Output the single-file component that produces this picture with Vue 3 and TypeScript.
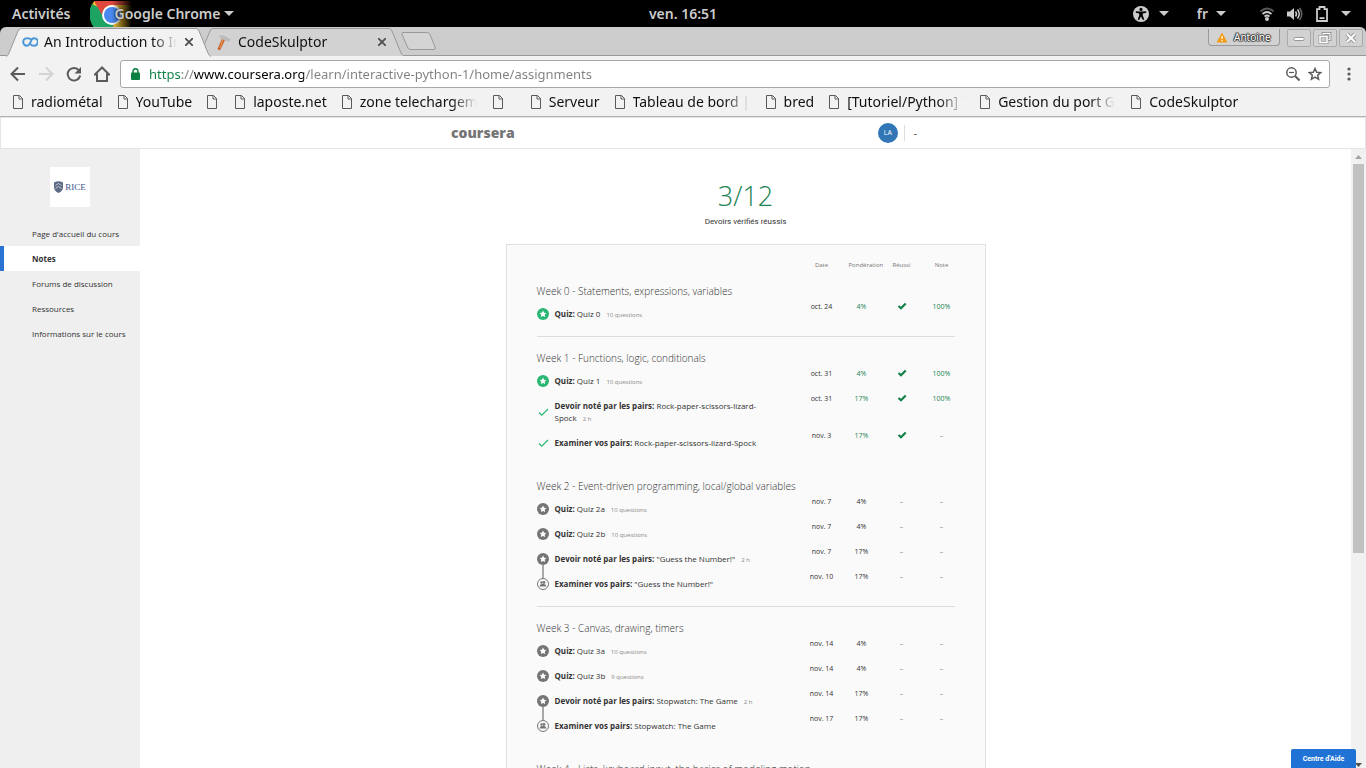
<script setup lang="ts">
import { ref } from 'vue'

interface Item {
  kind: string
  title: string
  meta?: string
  icon: 'star-done' | 'check' | 'star' | 'peers'
  date: string
  weight: string
  passed: boolean
  grade: string
}
interface Week {
  title: string
  divider: boolean
  items: Item[]
}

const url = ref('https://www.coursera.org/learn/interactive-python-1/home/assignments')

const bookmarks: string[] = [
  'radiométal', 'YouTube', '', 'laposte.net', 'zone telechargement', ' ', 'Serveur',
  'Tableau de bord | OpenClassrooms', 'bred', '[Tutoriel/Python] Tkinter', 'Gestion du port GPIO', 'CodeSkulptor',
]

const nav = ["Page d'accueil du cours", 'Notes', 'Forums de discussion', 'Ressources', 'Informations sur le cours']
const active = 'Notes'

const quiz = (title: string, meta: string, date: string, done = false): Item => ({
  kind: 'Quiz:', title, meta, date, icon: done ? 'star-done' : 'star',
  weight: '4%', passed: done, grade: done ? '100%' : '–',
})
const peer = (title: string, date: string, done = false): Item => ({
  kind: 'Devoir noté par les pairs:', title, meta: '2 h', date, icon: done ? 'check' : 'star',
  weight: '17%', passed: done, grade: done ? '100%' : '–',
})
const review = (title: string, date: string, done = false): Item => ({
  kind: 'Examiner vos pairs:', title, date, icon: done ? 'check' : 'peers',
  weight: '17%', passed: done, grade: '–',
})

const weeks: Week[] = [
  { title: 'Week 0 - Statements, expressions, variables', divider: true, items: [quiz('Quiz 0', '10 questions', 'oct. 24', true)] },
  {
    title: 'Week 1 - Functions, logic, conditionals', divider: false,
    items: [
      quiz('Quiz 1', '10 questions', 'oct. 31', true),
      peer('Rock-paper-scissors-lizard-Spock', 'oct. 31', true),
      review('Rock-paper-scissors-lizard-Spock', 'nov. 3', true),
    ],
  },
  {
    title: 'Week 2 - Event-driven programming, local/global variables', divider: true,
    items: [
      quiz('Quiz 2a', '10 questions', 'nov. 7'),
      quiz('Quiz 2b', '10 questions', 'nov. 7'),
      peer('"Guess the Number!"', 'nov. 7'),
      review('"Guess the Number!"', 'nov. 10'),
    ],
  },
  {
    title: 'Week 3 - Canvas, drawing, timers', divider: false,
    items: [
      quiz('Quiz 3a', '10 questions', 'nov. 14'),
      quiz('Quiz 3b', '9 questions', 'nov. 14'),
      peer('Stopwatch: The Game', 'nov. 14'),
      review('Stopwatch: The Game', 'nov. 17'),
    ],
  },
  { title: 'Week 4 - Lists, keyboard input, the basics of modeling motion', divider: false, items: [] },
]
</script>

<template>
  <div class="screen">
    <header class="shell">
      <div class="shell-left">
        <button class="shell-btn">Activités</button>
        <button class="shell-btn app-menu">
          <svg class="app-logo" width="44" height="26" viewBox="0 0 44 26" aria-hidden="true">
            <defs>
              <linearGradient id="fade" x1="0" x2="1"><stop offset=".5" stop-color="#fff" /><stop offset=".95" stop-color="#000" /></linearGradient>
              <mask id="fadeMask"><rect width="44" height="26" fill="url(#fade)" /></mask>
            </defs>
            <g mask="url(#fadeMask)">
              <circle cx="22" cy="13" r="22" fill="#f2c12e" />
              <path d="M22 13 L2 3 A22 22 0 0 0 10 32 L24 32 Z" fill="#1da362" />
              <path d="M4 0 Q22 -16 44 4 L22 4 A10 10 0 0 0 12 14 Z" fill="#e0483e" />
              <circle cx="22" cy="14" r="10" fill="#fff" />
              <circle cx="22" cy="14" r="8" fill="#4a87ee" />
            </g>
          </svg>
          <span class="app-name">Google Chrome</span>
          <svg width="10" height="6" viewBox="0 0 10 6"><path d="M0 0h10L5 5z" fill="#ccc" /></svg>
        </button>
      </div>
      <button class="shell-btn">ven. 16:51</button>
      <div class="shell-right">
        <button class="shell-btn tray" aria-label="Accessibilité">
          <svg width="16" height="16" viewBox="0 0 16 16">
            <circle cx="8" cy="8" r="8" fill="#ccc" />
            <circle cx="8" cy="3.4" r="1.6" fill="#000" />
            <path d="M2.8 5.2 L6.5 5.6h3L13.2 5.2v1.5L9.8 7.4v2l1.5 4.2-1.4.5L8 10.4 6.1 14.1l-1.4-.5 1.5-4.2v-2L2.8 6.7z" fill="#000" />
          </svg>
          <svg width="10" height="6" viewBox="0 0 10 6"><path d="M0 0h10L5 5z" fill="#ccc" /></svg>
        </button>
        <button class="shell-btn tray lang">fr<svg width="10" height="6" viewBox="0 0 10 6"><path d="M0 0h10L5 5z" fill="#ccc" /></svg></button>
        <button class="shell-btn tray status" aria-label="Système">
          <svg width="14" height="14" viewBox="0 0 14 14" fill="none">
            <path d="M.5 4.5Q7-1.500 13.500 4.500" stroke="#555" stroke-width="2" />
            <path d="M2.500 7Q7 3 11.500 7" stroke="#ccc" stroke-width="1.700" />
            <path d="M4.500 9.500Q7 7.500 9.500 9.500" stroke="#ccc" stroke-width="1.700" />
            <circle cx="7" cy="12" r="2" fill="#ccc" />
          </svg>
          <svg width="16" height="14" viewBox="0 0 16 14" fill="none">
            <path d="M0 4.500h3L7 1v12L3 9.500H0z" fill="#ccc" />
            <path d="M8.500 4.500q2 2.500 0 5M10.500 2.500q3.500 4.500 0 9" stroke="#ccc" stroke-width="1.500" />
            <path d="M12.500 1q4.500 6 0 12" stroke="#666" stroke-width="1.500" />
          </svg>
          <svg width="12" height="16" viewBox="0 0 12 16">
            <path d="M3.500 1h5v2.200H11V15H1V3.200h2.500z" fill="none" stroke="#ccc" stroke-width="1.800" />
            <path d="M3.500 11.200h5v1.800h-5z" fill="#ccc" />
          </svg>
          <svg width="10" height="6" viewBox="0 0 10 6"><path d="M0 0h10L5 5z" fill="#ccc" /></svg>
        </button>
      </div>
    </header>

    <div class="strip-back">
      <div class="strip">
        <div class="tabs" role="tablist">
          <div class="tab current">
            <svg class="tab-shape" width="205" height="29" viewBox="0 0 205 29" aria-hidden="true">
              <path d="M0 28.500Q2 28 3 25L12 3Q13 .500 15 .500H190Q192 .500 193 3L202 25Q203 28 205 28.500" fill="#f2f2f2" stroke="#999" />
              <path d="M1 28.500H204" stroke="#f2f2f2" stroke-width="1.500" />
            </svg>
            <svg class="favicon" width="16" height="10" viewBox="0 0 16 10" fill="none">
              <path d="M9.500 2.500Q7.500 1 5 1.200A3.800 3.800 0 0 0 5 8.800Q7 8.800 8.500 5T12 1.200A3.800 3.800 0 0 1 12 8.800Q9.500 8.800 8.500 7" stroke="#4b97d8" stroke-width="2" />
            </svg>
            <span class="tab-title">An Introduction to Interactive</span>
            <button class="tab-close" aria-label="Fermer l'onglet"><svg width="8" height="8" viewBox="0 0 8 8"><path d="M0 0L8 8M8 0L0 8" stroke="#4f4f4f" stroke-width="1.800" /></svg></button>
          </div>
          <div class="tab">
            <svg class="tab-shape" width="205" height="28" viewBox="0 0 205 28" aria-hidden="true">
              <path d="M8 10L11 3Q12 .500 14 .500H190Q192 .500 193 3L202 25Q203 27 205 28H12Q9 27 8 24L5 16z" fill="#d2d2d2" />
              <path d="M5.500 16L11 3Q12 .500 14 .500H190Q192 .500 193 3L202 25Q203 27 205 28" fill="none" stroke="#999" />
            </svg>
            <svg class="favicon" width="16" height="16" viewBox="0 0 16 16">
              <path d="M6 4.500L9 6 4.500 15.500Q3 16.500 1.500 15z" fill="#c9652b" />
              <path d="M7 5L4 14" stroke="#e79a5c" />
              <path d="M2 1Q6-.500 10 1.500L15 5 13 8 9 6.500 5 4.500Q4 2.500 2 1z" fill="#bcbcbc" />
              <path d="M2 1Q6-.500 10 1.500L14 4.500" fill="none" stroke="#ddd" />
            </svg>
            <span class="tab-title">CodeSkulptor</span>
            <button class="tab-close" aria-label="Fermer l'onglet"><svg width="8" height="8" viewBox="0 0 8 8"><path d="M0 0L8 8M8 0L0 8" stroke="#4f4f4f" stroke-width="1.800" /></svg></button>
          </div>
          <button class="new-tab" aria-label="Nouvel onglet">
            <svg width="36" height="19" viewBox="0 0 36 19"><path d="M2 .500H26Q28 .500 29 2.500L34 15Q35 17.500 33 17.500H9Q7.500 17.500 6.500 15L1 2.500Q.500 .500 2 .500z" fill="#d4d4d4" stroke="#999" /></svg>
          </button>
        </div>
        <div class="window-tools">
          <button class="profile">
            <svg width="12" height="11" viewBox="0 0 12 11"><path d="M6 .500L11.500 10.500H.500z" fill="#f29c11" /><path d="M6 4v3M6 8v1.200" stroke="#fff" stroke-width="1.200" /></svg>
            <span>Antoine</span>
          </button>
          <button class="win" aria-label="Réduire"><svg width="14" height="12" viewBox="0 0 14 12"><rect x="2" y="5.500" width="10" height="3" rx="1" fill="#fff" stroke="#999" /></svg></button>
          <button class="win" aria-label="Restaurer"><svg width="14" height="12" viewBox="0 0 14 12" fill="none"><path d="M5 1.500h7v6H5z" stroke="#999" stroke-width="3" /><path d="M5 1.500h7v6H5z" stroke="#fff" /><path d="M2 4.500h7v6H2z" fill="#ccc" stroke="#999" stroke-width="3" /><path d="M2 4.500h7v6H2z" stroke="#fff" stroke-width="1.500" /></svg></button>
          <button class="win" aria-label="Fermer"><svg width="14" height="12" viewBox="0 0 14 12"><path d="M3 2l8 8M11 2l-8 8" stroke="#999" stroke-width="4" /><path d="M3 2l8 8M11 2l-8 8" stroke="#fff" stroke-width="2" /></svg></button>
        </div>
      </div>
    </div>

    <div class="toolbar">
      <button class="tool" aria-label="Précédent"><svg width="16" height="16" viewBox="0 0 16 16" fill="none" stroke="#5a5a5a" stroke-width="2"><path d="M15 8H2M8 1.500L1.500 8 8 14.500" /></svg></button>
      <button class="tool" aria-label="Suivant"><svg width="16" height="16" viewBox="0 0 16 16" fill="none" stroke="#d3d3d3" stroke-width="2"><path d="M1 8h13M8 1.500L14.500 8 8 14.500" /></svg></button>
      <button class="tool" aria-label="Actualiser"><svg width="16" height="16" viewBox="0 0 16 16"><path d="M13 4.300A6.300 6.300 0 1 0 14.200 9.500" fill="none" stroke="#5a5a5a" stroke-width="2" /><path d="M15 1v6.500H8.500z" fill="#5a5a5a" /></svg></button>
      <button class="tool" aria-label="Accueil"><svg width="16" height="16" viewBox="1 0 16 16"><path d="M9 1.500L1.800 8.500H4V15h10V8.500h2.200z" fill="none" stroke="#5a5a5a" stroke-width="2" /></svg></button>
      <div class="omnibox">
        <svg width="9" height="12" viewBox="0 0 9 12"><rect y="4.500" width="9" height="7.500" rx="1" fill="#0b8043" /><path d="M2 5V3.200a2.500 2.500 0 0 1 5 0V5" fill="none" stroke="#0b8043" stroke-width="1.500" /></svg>
        <input v-model="url" class="url" type="text" aria-label="Adresse" spellcheck="false" />
        <button class="tool" aria-label="Zoom"><svg width="14" height="14" viewBox="0 0 14 14" fill="none" stroke="#5a5a5a"><circle cx="5.500" cy="5.500" r="4.700" stroke-width="1.500" /><path d="M3 5.500h5" stroke-width="1.200" /><path d="M9 9l4.500 4.500" stroke-width="2" /></svg></button>
        <button class="tool" aria-label="Favori"><svg width="14" height="14" viewBox="0 0 14 14"><path d="M7 1.500l1.700 3.700 4 .4-3 2.700.9 4L7 10.200l-3.600 2.100.9-4-3-2.700 4-.4z" fill="none" stroke="#5a5a5a" stroke-width="1.500" /></svg></button>
      </div>
      <button class="tool more" aria-label="Menu"><svg width="4" height="14" viewBox="0 0 4 14" fill="#5a5a5a"><circle cx="2" cy="2" r="1.600" /><circle cx="2" cy="7" r="1.600" /><circle cx="2" cy="12" r="1.600" /></svg></button>
    </div>

    <nav class="bookmarks" aria-label="Favoris">
      <a v-for="(b, i) in bookmarks" :key="i" href="#" class="bookmark" :class="{ bare: !b, blank: b === ' ' }">
        <svg width="10" height="14" viewBox="0 0 10 14"><path d="M.500 .500H6.500L9.500 3.500V13.500H.500zM6 .500V4H9.500" fill="none" stroke="#5a5a5a" /></svg>
        <span v-if="b.trim()" class="bookmark-title">{{ b }}</span>
      </a>
    </nav>

    <div class="page">
      <header class="site">
        <a href="#" class="brand" aria-label="coursera">coursera</a>
        <div class="user">
          <span class="avatar">LA</span>
          <button class="user-menu" aria-label="Menu utilisateur">-</button>
        </div>
      </header>

      <div class="body">
        <aside class="side">
          <div class="school">
            <svg width="9" height="12" viewBox="0 0 9 12"><path d="M0 1.500Q4.500-1 9 1.500V6Q9 10 4.500 12 0 10 0 6z" fill="#5d6b86" /><path d="M1.500 4.500L4.500 2.500l3 2M1.500 7.500l3-2 3 2" fill="none" stroke="#c4cbd8" /></svg>
            <span>RICE</span>
          </div>
          <nav class="course-nav" aria-label="Cours">
            <a v-for="n in nav" :key="n" href="#" :class="{ active: n === active }">{{ n }}</a>
          </nav>
        </aside>

        <main class="main">
          <h1 class="score">3/12</h1>
          <p class="score-label">Devoirs vérifiés réussis</p>
          <section class="card">
            <table class="grades">
              <colgroup><col /><col class="c" /><col class="c" /><col class="c" /><col class="c-last" /></colgroup>
              <thead>
                <tr><td></td><th scope="col">Date</th><th scope="col">Pondération</th><th scope="col">Réussi</th><th scope="col">Note</th></tr>
              </thead>
              <tbody v-for="w in weeks" :key="w.title" :class="{ divided: w.divider }">
                <tr><th class="week" colspan="5" scope="rowgroup">{{ w.title }}</th></tr>
                <tr v-for="it in w.items" :key="it.kind + it.title">
                  <td class="name">
                    <div class="item">
                      <span class="mark" :class="it.icon">
                        <svg v-if="it.icon === 'check'" width="12" height="12" viewBox="0 0 12 12"><path d="M2 6.500L4.800 9.200 11 3" fill="none" stroke="#2ab673" stroke-width="1.200" /></svg>
                        <svg v-else-if="it.icon === 'peers'" width="12" height="12" viewBox="0 0 12 12"><circle cx="6" cy="6" r="5.500" fill="#fafafa" stroke="#757575" /><circle cx="4.500" cy="4.500" r="1.200" fill="#757575" /><circle cx="7" cy="4.500" r="1.400" fill="#757575" /><path d="M2.500 8.500Q2.800 6 4.500 6T7 6Q9.200 6.200 9.500 8.500z" fill="#757575" /></svg>
                        <svg v-else width="12" height="12" viewBox="0 0 12 12"><circle cx="6" cy="6" r="6" fill="currentColor" /><path d="M6 2.500l1.100 2.200 2.400.3-1.800 1.600.5 2.500L6 7.900 3.800 9.100l.5-2.500L2.500 5l2.400-.3z" fill="#fff" /></svg>
                      </span>
                      <a href="#" class="text"><b>{{ it.kind }}</b> {{ it.title }}<small v-if="it.meta">{{ it.meta }}</small></a>
                    </div>
                  </td>
                  <td>{{ it.date }}</td>
                  <td :class="{ ok: it.passed }">{{ it.weight }}</td>
                  <td :class="{ none: !it.passed }">
                    <svg v-if="it.passed" class="tick" width="10" height="8" viewBox="0 0 10 8" role="img" aria-label="Oui"><path d="M1.500 4L4 6.300 8.700 1.500" fill="none" stroke="#14804a" stroke-width="2.200" /></svg>
                    <template v-else>–</template>
                  </td>
                  <td :class="it.grade === '–' ? 'none' : 'ok'">{{ it.grade }}</td>
                </tr>
              </tbody>
            </table>
          </section>
        </main>

        <div class="scroll" aria-hidden="true">
          <svg width="7" height="4" viewBox="0 0 7 4"><path d="M0 4L3.500 0 7 4z" fill="#a3a3a3" /></svg>
          <div class="track"><div class="thumb"></div></div>
          <svg width="7" height="4" viewBox="0 0 7 4"><path d="M0 0h7L3.500 4z" fill="#505050" /></svg>
        </div>
      </div>
      <button class="help">Centre d'Aide</button>
    </div>
  </div>
</template>

<style>
body {
  background: #fff;
  overflow: hidden;
}
</style>

<style scoped>
* {
  box-sizing: border-box;
}
button {
  border: 0;
  padding: 0;
  margin: 0;
  background: none;
  font: inherit;
  color: inherit;
}
a {
  color: inherit;
  text-decoration: none;
}
svg {
  display: block;
  flex: none;
}
.screen {
  display: flex;
  flex-direction: column;
  height: 100vh;
  overflow: hidden;
  font-family: "Noto Sans", "Open Sans", sans-serif;
  font-size: 14px;
  color: #111;
}

/* Desktop bar */
.shell {
  display: grid;
  grid-template-columns: 1fr auto 1fr;
  align-items: center;
  height: 27px;
  flex: none;
  background: #000;
  color: #ccc;
  font-size: 14px;
  font-weight: 600;
}
.shell-left,
.shell-right {
  display: flex;
  align-items: center;
}
.shell-left {
  padding-left: 12px;
  gap: 20px;
}
.shell-right {
  justify-content: flex-end;
  padding-right: 15px;
}
.shell-btn {
  display: flex;
  align-items: center;
  height: 26px;
}
.app-name {
  margin: 0 4px 0 -20px;
  z-index: 1;
  text-shadow: 0 0 2px #000;
}
.tray {
  gap: 10px;
}
.lang {
  gap: 8px;
  margin-left: 28px;
}
.status {
  gap: 13px;
  margin-left: 34px;
}

/* Tab strip */
.strip-back {
  flex: none;
  background: #000;
}
.strip {
  display: flex;
  justify-content: space-between;
  height: 29px;
  background: #ccc;
  border-radius: 6px 6px 0 0;
  box-shadow: inset 0 -1px #999;
}
.tabs {
  display: flex;
  align-items: flex-end;
  padding-left: 6px;
}
.tab {
  display: flex;
  align-items: center;
  position: relative;
  width: 205px;
  height: 28px;
  padding: 0 18px 0 17px;
  margin-left: -12px;
}
.tab.current {
  margin-left: 0;
  padding-left: 16px;
  z-index: 1;
}
.tab-shape {
  position: absolute;
  inset: 0;
}
.favicon,
.tab-title,
.tab-close {
  position: relative;
}
.tab-title {
  flex: 1;
  margin: 0 8px 0 6px;
  line-height: 20px;
  white-space: nowrap;
  overflow: hidden;
  mask-image: linear-gradient(90deg, #000 calc(100% - 24px), transparent);
}
.new-tab {
  align-self: center;
  margin-left: -3px;
}
.window-tools {
  display: flex;
  align-items: flex-start;
  padding: 2px 3px 0 0;
  gap: 2px;
}
.profile {
  display: flex;
  align-items: center;
  gap: 6px;
  width: 72px;
  height: 17px;
  padding: 0 7px;
  margin-right: 5px;
  border: 1px solid #999;
  border-top: 0;
  border-radius: 0 0 4px 4px;
  background: #d2d2d2;
  font-size: 10px;
  color: #fff;
  text-shadow: 0 0 1px #333, 1px 0 1px #333, 0 1px 1px #333, -1px 0 1px #333, 0 -1px 1px #333;
}
.win {
  display: grid;
  place-items: center;
  width: 24px;
  height: 18px;
  border: 1px solid #aaa;
  border-radius: 2px;
  background: #d2d2d2;
}

/* Toolbar */
.toolbar {
  display: flex;
  align-items: center;
  flex: none;
  gap: 12px;
  height: 36px;
  padding: 0 15px 0 10px;
  background: #f2f2f2;
}
.omnibox {
  display: flex;
  align-items: center;
  flex: 1;
  height: 28px;
  margin: 0 5px 0 -2px;
  padding: 0 7px 0 10px;
  gap: 8px;
  border: 1px solid #a8a8a8;
  border-radius: 3px;
  background: #fff;
}
.url {
  flex: 1;
  height: 26px;
  padding: 0 0 0 1px;
  border: 0;
  outline: 0;
  font: inherit;
  font-size: 13px;
  color: transparent;
  background: linear-gradient(90deg, #0b8043 34px, #808080 34px, #808080 46px, #000 46px, #000 156px, #808080 156px);
  background-clip: text;
}
.bookmarks {
  display: flex;
  align-items: center;
  flex: none;
  gap: 15px;
  height: 25px;
  padding: 0 13px 5px;
  background: #f2f2f2;
  border-bottom: 1px solid #b0b0b0;
}
.bookmark {
  display: flex;
  align-items: center;
  gap: 8px;
  line-height: 20px;
}
.bare {
  width: 13px;
}
.blank {
  width: 23px;
}
.bookmark-title {
  max-width: 118px;
  overflow: hidden;
  white-space: nowrap;
  mask-image: linear-gradient(90deg, #000 92px, transparent 117px);
}

/* Page */
.page {
  display: flex;
  flex-direction: column;
  flex: 1;
  min-height: 0;
  position: relative;
  background: #fff;
  font-family: "Open Sans", "Noto Sans", sans-serif;
  font-size: 8px;
  line-height: 12px;
  color: #333;
}
.site {
  display: flex;
  align-items: center;
  justify-content: space-between;
  flex: none;
  height: 32px;
  padding: 0 448px 0 450px;
  border: 1px solid #e5e5e5;
}
.brand {
  font: 800 14px/20px "Open Sans", sans-serif;
  color: #757575;
}
.user {
  display: flex;
  align-items: center;
}
.avatar {
  display: grid;
  place-items: center;
  width: 20px;
  height: 20px;
  border-radius: 50%;
  background: #3277b5;
  color: #fff;
  font-size: 7px;
}
.user-menu {
  height: 16px;
  margin-left: 6px;
  padding-left: 9px;
  border-left: 1px solid #ddd;
  font-size: 10px;
}
.body {
  display: flex;
  flex: 1;
  min-height: 0;
}
.side {
  flex: none;
  width: 140px;
  padding-top: 18px;
  background: #efefef;
}
.school {
  display: flex;
  align-items: center;
  justify-content: center;
  gap: 2px;
  width: 40px;
  height: 40px;
  margin: 0 auto 14px;
  background: #fff;
  font: 9px/12px "Liberation Serif", serif;
  color: #3c5690;
}
.course-nav a {
  display: block;
  padding-left: 28px;
  border-left: 4px solid transparent;
  line-height: 25px;
}
.course-nav a.active {
  border-color: #2a73d4;
  background: #fff;
  font-weight: 700;
}
.main {
  flex: 1;
  overflow: hidden;
  padding-top: 27px;
}
.score {
  margin: 0;
  font-size: 27px;
  font-weight: 300;
  line-height: 40px;
  text-align: center;
  color: #1c8354;
}
.score-label {
  margin: 0 0 16px;
  font-family: Roboto, sans-serif;
  text-align: center;
}
.card {
  max-width: 480px;
  margin: 0 auto;
  padding: 0 30px 20px;
  border: 1px solid #e0e0e0;
  background: #fafafa;
}
.grades {
  width: 100%;
  table-layout: fixed;
  border-spacing: 0;
}
.c {
  width: 40px;
}
.c-last {
  width: 26px;
}
.grades td,
.grades th {
  padding: 0 14px 0 0;
  vertical-align: top;
  font-size: 7px;
  line-height: 10px;
  text-align: center;
  white-space: nowrap;
}
.grades td:last-child,
.grades th:last-child {
  padding-right: 0;
}
.grades thead th {
  padding-top: 15px;
  font-size: 6px;
  font-weight: 400;
  color: #777;
}
.grades .week {
  padding: 13px 0 3px;
  font-size: 10px;
  font-weight: 300;
  line-height: 16px;
  text-align: left;
}
.grades .name {
  padding: 6px 40px 7px 0;
  line-height: 12px;
  text-align: left;
  white-space: normal;
}
.grades tbody tr:last-child .name {
  padding-bottom: 16px;
}
.divided tr:last-child td {
  border-bottom: 1px solid #dcdcdc;
}
.item {
  display: flex;
  align-items: center;
  gap: 6px;
  font-size: 8px;
}
.mark {
  position: relative;
  color: #757575;
}
.mark.star-done {
  color: #2ab673;
}
.mark.peers::before {
  content: "";
  position: absolute;
  left: 5px;
  bottom: 12px;
  width: 2px;
  height: 13px;
  background: #a8a8a8;
}
.text small {
  margin-left: 6px;
  font-size: 6px;
  line-height: 8px;
  color: #888;
}
.tick {
  margin: 0 auto;
}
.ok {
  color: #1c8354;
}
.none {
  color: #888;
}
.scroll {
  display: flex;
  flex-direction: column;
  align-items: center;
  flex: none;
  width: 15px;
  padding: 6px 0 1px;
  background: #f1f1f1;
}
.track {
  flex: 1;
  width: 11px;
  margin: 5px 0 10px;
}
.thumb {
  height: 66%;
  background: #c1c1c1;
}
.help {
  position: absolute;
  right: 10px;
  bottom: 0;
  width: 65px;
  height: 19px;
  border-radius: 2px 2px 0 0;
  background: #2073d5;
  color: #fff;
  font-family: Roboto, sans-serif;
  font-size: 7px;
  font-weight: 700;
}
</style>
